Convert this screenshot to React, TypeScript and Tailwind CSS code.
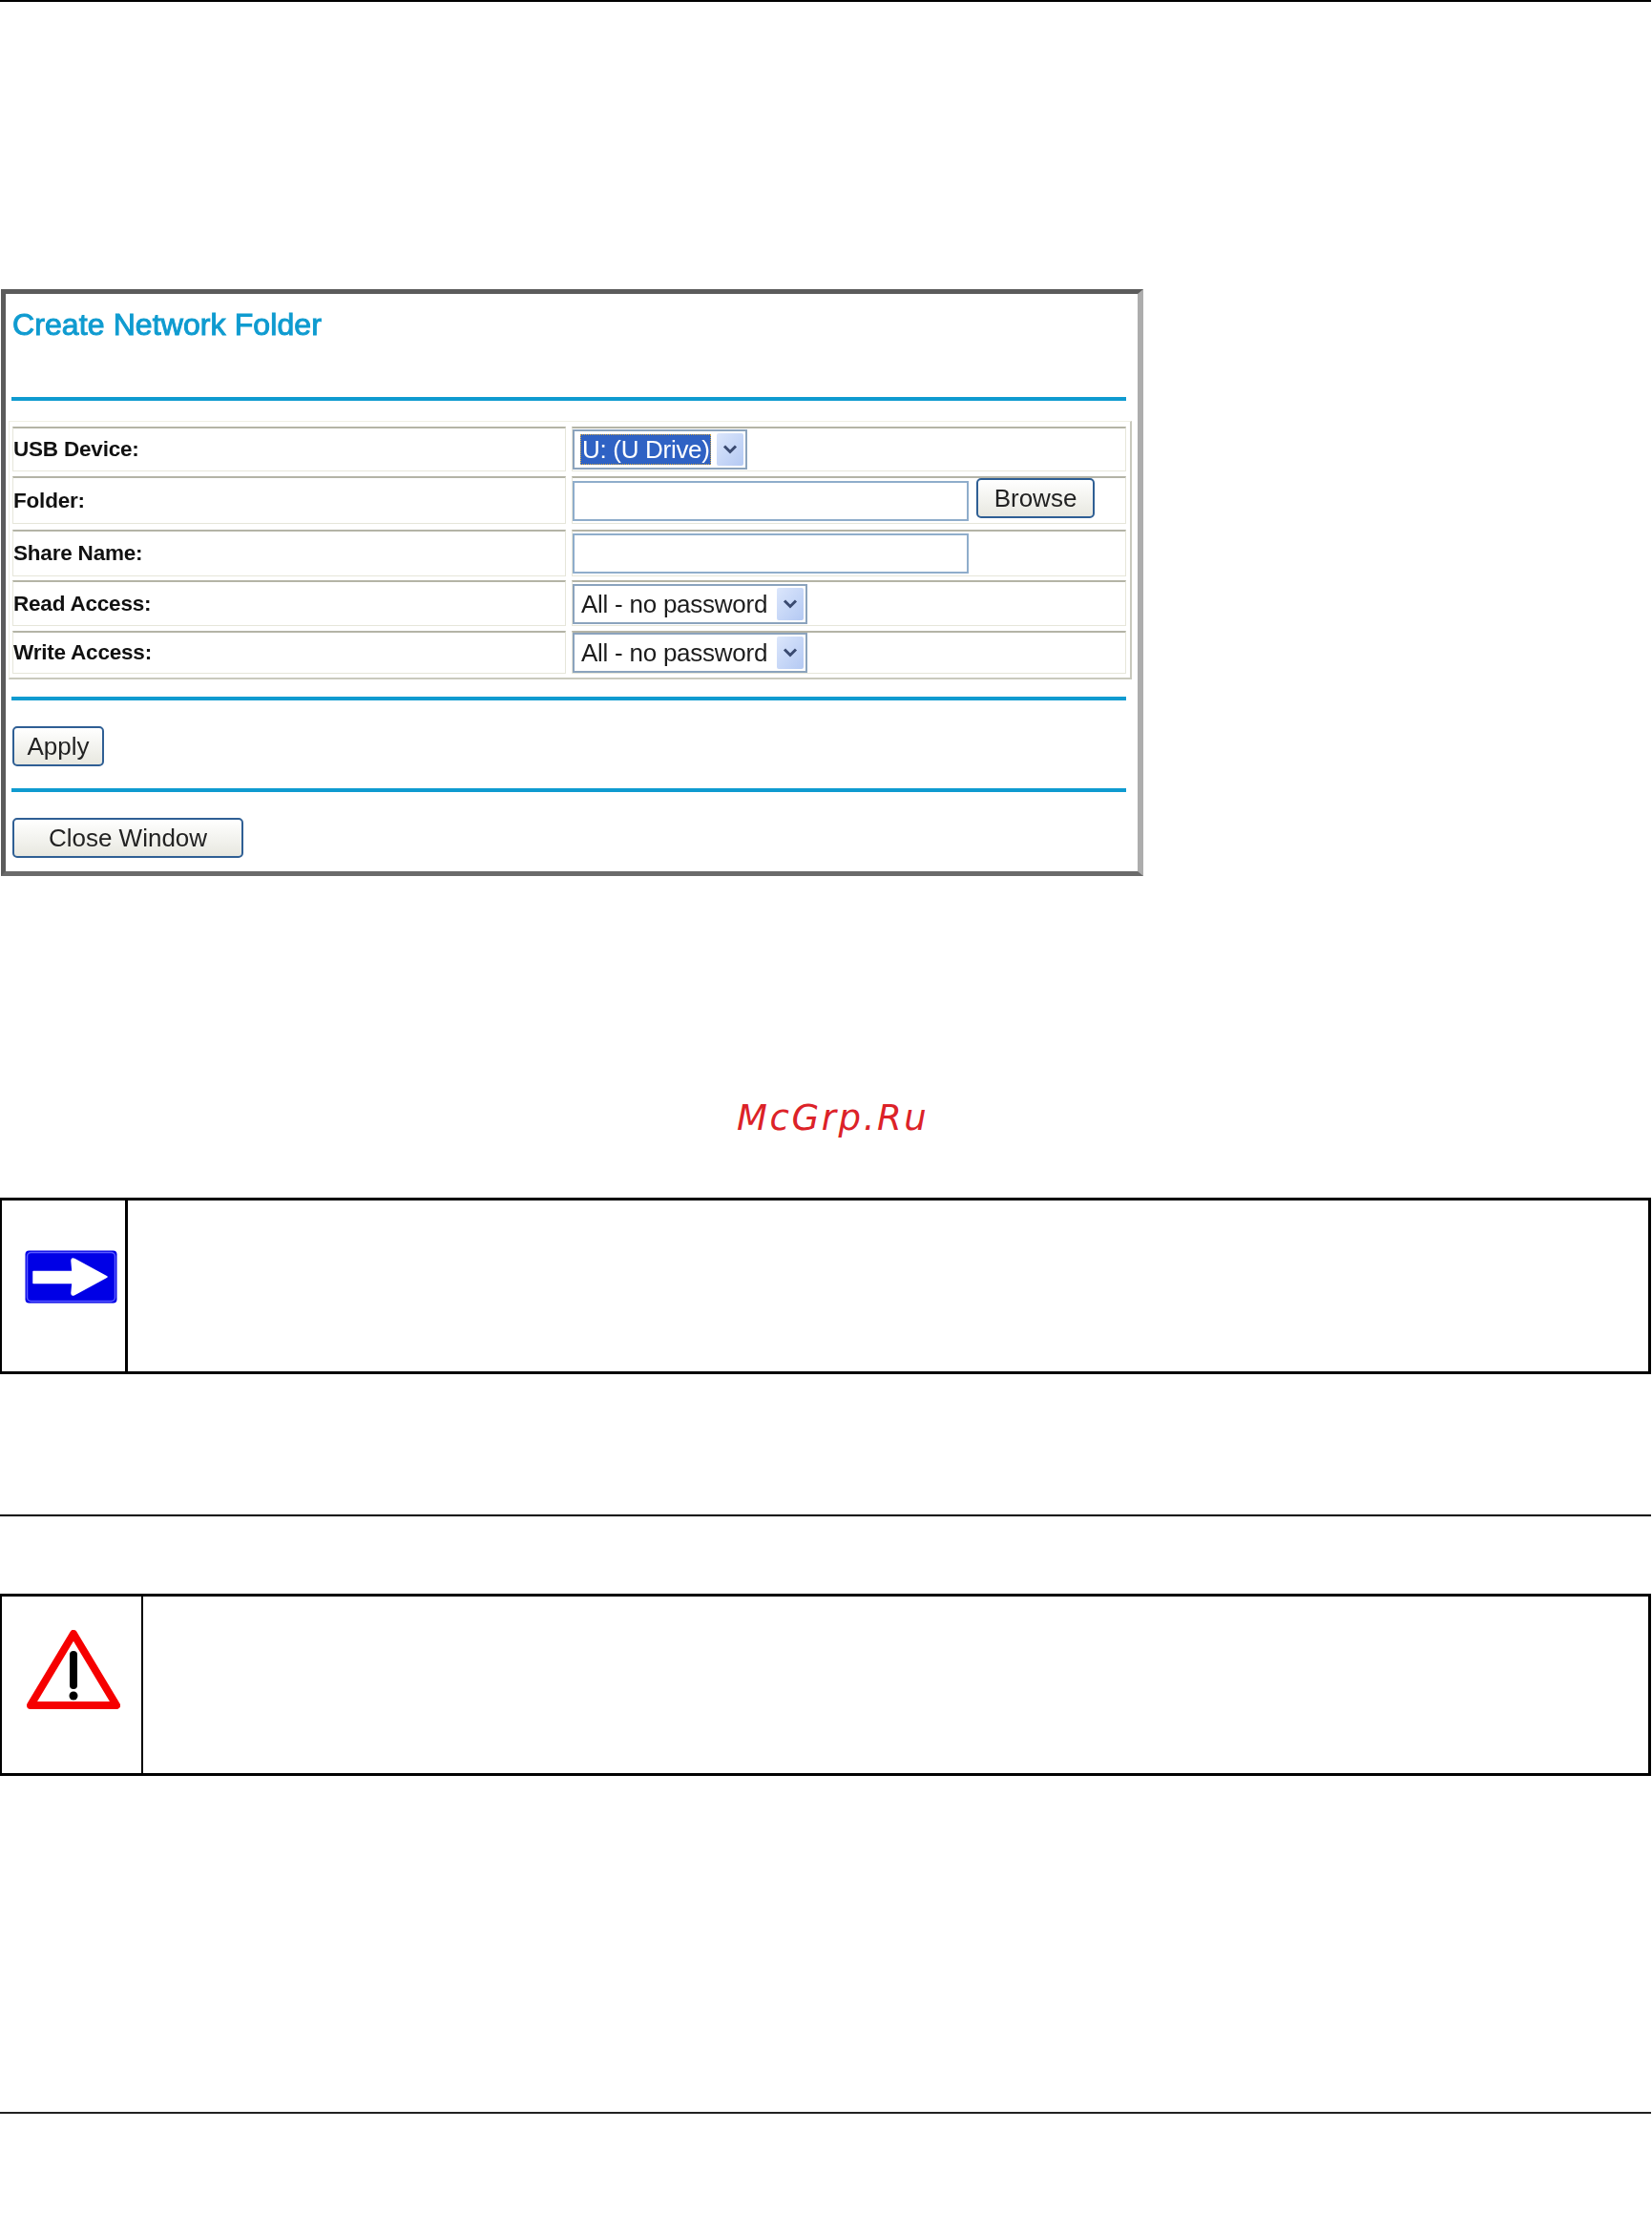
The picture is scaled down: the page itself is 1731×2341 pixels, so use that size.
import React from 'react'

const Arial = "font-['Liberation_Sans',Arial,sans-serif]"

const BlueRule = ({ className }: { className: string }) => (
  <div className={`ml-[6px] w-[1168px] h-[4px] bg-[#0f9bd0] shrink-0 ${className}`}></div>
)

const Chevron = () => (
  <svg width="16" height="12" viewBox="0 0 16 12">
    <polyline points="2,2.5 8,8.5 14,2.5" fill="none" stroke="#3a4a70" strokeWidth="3" />
  </svg>
)

const SelectBox = ({ text, width, selected }: { text: string; width: string; selected?: boolean }) => (
  <div className={`${width} h-[42px] border-2 border-[#8ba3bd] bg-white flex items-center pl-[6px] pr-[2px] justify-between`}>
    {selected ? (
      <span className="h-[32px] w-[137px] bg-[#2f62c4] border border-dotted border-[#caa040] text-white text-[26px] leading-[30px] pl-[1px] whitespace-nowrap overflow-hidden tracking-[-0.3px]">
        {text}
      </span>
    ) : (
      <span className="ml-[1px] text-[26px] leading-[30px] text-[#1c1c1c] whitespace-nowrap tracking-[-0.25px]">{text}</span>
    )}
    <span className="w-[28px] h-[34px] rounded-[2px] bg-gradient-to-br from-[#dbe6fb] to-[#b4c9f3] flex items-center justify-center">
      <Chevron />
    </span>
  </div>
)

const TextBox = () => (
  <input readOnly className="w-[415px] h-[42px] border-2 border-[#8fadcb] bg-white" />
)

const PanelButton = ({ label, className }: { label: string; className: string }) => (
  <button className={`${className} h-[42px] rounded-[5px] border-2 border-[#2f5f94] bg-gradient-to-b from-white to-[#e8e8e0] text-[26px] leading-none text-[#222222] flex items-center justify-center`}>
    {label}
  </button>
)

const Row = ({ label, height, gap, children }: { label: string; height: string; gap: string; children: React.ReactNode }) => (
  <div className={`flex gap-[6px] ${height} ${gap}`}>
    <div className="w-[580px] border border-[#e6e6da] border-t-2 border-t-[#b4b4a6] flex items-center font-bold text-[22.5px] text-[#111111] whitespace-nowrap tracking-[-0.2px]">
      {label}
    </div>
    <div className="w-[581px] border border-[#e6e6da] border-t-2 border-t-[#b4b4a6] flex items-center gap-[8px]">
      {children}
    </div>
  </div>
)

const App = () => {
  return (
    <div className={`w-[1731px] h-[2341px] bg-white flex flex-col overflow-hidden ${Arial}`}>
      <div className="w-[1730px] h-[2px] bg-black shrink-0"></div>

      {/* Create Network Folder panel */}
      <div className="mt-[301px] ml-[1px] w-[1197px] h-[615px] shrink-0 flex flex-col border-[5px] border-t-[#5c5c5c] border-l-[#5c5c5c] border-b-[#6a6a6a] border-r-[#adadad] border-r-[6px] bg-white blur-[0.6px]">
        <div className="h-[108px] shrink-0 pl-[7px] pt-[14px]">
          <h1 className="text-[32px] leading-[36px] font-normal [-webkit-text-stroke:1px_#0f9bd0] text-[#0f9bd0] whitespace-nowrap tracking-[0.1px]">Create Network Folder</h1>
        </div>
        <BlueRule className="" />

        <div className="mt-[21px] ml-[3px] w-[1177px] h-[271px] shrink-0 border border-[#efefe4] border-b-2 border-b-[#c9c9bd] border-r-2 border-r-[#c9c9bd] pl-[3px] pt-[5px]">
          <Row label="USB Device:" height="h-[47px]" gap="mb-[5px]">
            <SelectBox text="U: (U Drive)" width="w-[183px]" selected />
          </Row>
          <Row label="Folder:" height="h-[50px]" gap="mb-[6px]">
            <TextBox />
            <PanelButton label="Browse" className="w-[124px] -mt-[6px]" />
          </Row>
          <Row label="Share Name:" height="h-[49px]" gap="mb-[4px]">
            <TextBox />
          </Row>
          <Row label="Read Access:" height="h-[48px]" gap="mb-[5px]">
            <SelectBox text="All - no password" width="w-[246px]" />
          </Row>
          <Row label="Write Access:" height="h-[45px]" gap="">
            <SelectBox text="All - no password" width="w-[246px]" />
          </Row>
        </div>

        <BlueRule className="mt-[18px]" />
        <PanelButton label="Apply" className="ml-[7px] mt-[27px] w-[96px] shrink-0" />
        <BlueRule className="mt-[23px]" />
        <PanelButton label="Close Window" className="ml-[7px] mt-[27px] w-[242px] shrink-0" />
      </div>

      {/* Watermark */}
      <div className="mt-[228px] ml-[772px] h-[52px] shrink-0 text-[37px] leading-[52px] italic font-['DejaVu_Sans',sans-serif] text-[#dc2228] tracking-[2.6px] whitespace-nowrap">
        McGrp.Ru
      </div>

      {/* Note box */}
      <div className="mt-[57px] w-[1730px] h-[185px] shrink-0 border-[3px] border-l-2 border-black flex">
        <div className="w-[132px] h-full border-r-[3px] border-black flex flex-col items-start pl-[24px] pt-[52px]">
          <svg className="blur-[0.4px]" width="98" height="56" viewBox="0 0 98 56">
            <rect x="0.5" y="0.5" width="96" height="55" rx="4" fill="#0000e6" />
            <rect x="2.5" y="2.5" width="92" height="51" rx="4" fill="none" stroke="#5a5aff" strokeWidth="1.5" />
            <path d="M9 22.5H50L49 11Q49 8 52 9.5L86 28L52 46.5Q49 48 49 45L50 34.5H9Z" fill="#fff" stroke="#fff" strokeWidth="1.5" strokeLinejoin="round" />
          </svg>
        </div>
      </div>

      <div className="mt-[147px] w-[1730px] h-[2px] bg-black shrink-0"></div>

      {/* Warning box */}
      <div className="mt-[81px] w-[1730px] h-[191px] shrink-0 border-[3px] border-l-2 border-black flex">
        <div className="w-[148px] h-full border-r-2 border-black flex flex-col items-start pl-[25px] pt-[34px]">
          <svg className="blur-[0.4px]" width="100" height="86" viewBox="0 0 100 86">
            <path d="M50 5L95 80H5Z" fill="#fff" stroke="#f60000" strokeWidth="8" strokeLinejoin="round" />
            <rect x="46" y="23" width="8" height="40" rx="4" fill="#000" />
            <circle cx="50" cy="70" r="4.5" fill="#000" />
          </svg>
        </div>
      </div>

      <div className="mt-[352px] w-[1730px] h-[2px] bg-[#222222] shrink-0"></div>
    </div>
  )
}

export default App
